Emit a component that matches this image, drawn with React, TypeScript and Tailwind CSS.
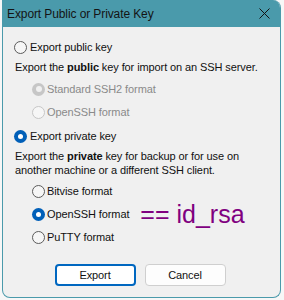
const font = { fontFamily: '"Liberation Sans", Arial, sans-serif' };

type RadioProps = {
  checked?: boolean;
  disabled?: boolean;
};

const Radio = ({ checked, disabled }: RadioProps) => {
  if (checked && disabled) {
    return (
      <span className="flex h-[13px] w-[13px] shrink-0 items-center justify-center rounded-full bg-[#c6c6c6]">
        <span className="h-[6px] w-[6px] rounded-full bg-[#f0f0f0]" />
      </span>
    );
  }
  if (checked) {
    return (
      <span className="flex h-[13px] w-[13px] shrink-0 items-center justify-center rounded-full bg-[#005fb8]">
        <span className="h-[5px] w-[5px] rounded-full bg-white" />
      </span>
    );
  }
  return (
    <span
      className={
        disabled
          ? "h-[13px] w-[13px] shrink-0 rounded-full border border-[#c6c6c6] bg-[#f6f6f6]"
          : "h-[13px] w-[13px] shrink-0 rounded-full border border-[#5b5b5b] bg-[#f6f6f6]"
      }
    />
  );
};

const App = () => {
  return (
    <div className="h-[300px] w-[284px] bg-[#f7f7f7] pl-[2px] pr-[3px] text-[11px] tracking-[-0.1px] text-[#111]" style={font}>
      <div className="flex h-[298px] flex-col overflow-hidden rounded-b-[8px] rounded-tr-[8px] border-x border-b border-[#4a9aab] bg-[#f0f0f0]">
        <div className="flex h-[27px] shrink-0 items-center justify-between bg-[#4a9aab] pl-[4px] pr-[10px]">
          <span className="text-[12px] tracking-[-0.1px] text-[#141414]">Export Public or Private Key</span>
          <svg width="11" height="11" viewBox="0 0 11 11" className="mb-[1px]">
            <path d="M0.5 0.5 L10.5 10.5 M10.5 0.5 L0.5 10.5" stroke="#111" strokeWidth="1" fill="none" />
          </svg>
        </div>

        <div className="flex flex-col whitespace-nowrap pl-[11px] pt-[10px]">
          <label className="flex h-[20px] items-center gap-[3px]">
            <Radio />
            <span>Export public key</span>
          </label>
          <p className="mt-[2px] h-[16px] pl-[1px] leading-[16px]">
            Export the <b>public</b> key for import on an SSH server.
          </p>
          <div className="flex flex-col pl-[18px]">
            <label className="mt-[4px] flex h-[20px] items-center gap-[2px] text-[#8a8a8a]">
              <Radio checked disabled />
              <span>Standard SSH2 format</span>
            </label>
            <label className="mt-[3px] flex h-[20px] items-center gap-[2px] text-[#8a8a8a]">
              <Radio disabled />
              <span>OpenSSH format</span>
            </label>
          </div>

          <label className="mt-[4px] flex h-[20px] items-center gap-[3px]">
            <Radio checked />
            <span>Export private key</span>
          </label>
          <p className="mt-[3px] pl-[1px] leading-[14px]">
            Export the <b>private</b> key for backup or for use on
            <br />
            another machine or a different SSH client.
          </p>
          <div className="flex flex-col pl-[18px]">
            <label className="mt-[4px] flex h-[20px] items-center gap-[2px]">
              <Radio />
              <span>Bitvise format</span>
            </label>
            <label className="mt-[3px] flex h-[20px] items-center gap-[2px]">
              <Radio checked />
              <span>OpenSSH format</span>
              <span className="ml-[9px] text-[25px] leading-[20px] tracking-normal text-[#800080]">== id_rsa</span>
            </label>
            <label className="mt-[3px] flex h-[20px] items-center gap-[2px]">
              <Radio />
              <span>PuTTY format</span>
            </label>
          </div>
        </div>

        <div className="mt-[17px] flex justify-center gap-[9px] pr-[3px]">
          <button className="h-[22px] w-[81px] rounded-[4px] border-2 border-[#0067c0] bg-white text-[11px]">
            Export
          </button>
          <button className="h-[22px] w-[81px] rounded-[4px] border border-[#cfcfcf] bg-[#fdfdfd] text-[11px]">
            Cancel
          </button>
        </div>
      </div>
    </div>
  );
};

export default App;
